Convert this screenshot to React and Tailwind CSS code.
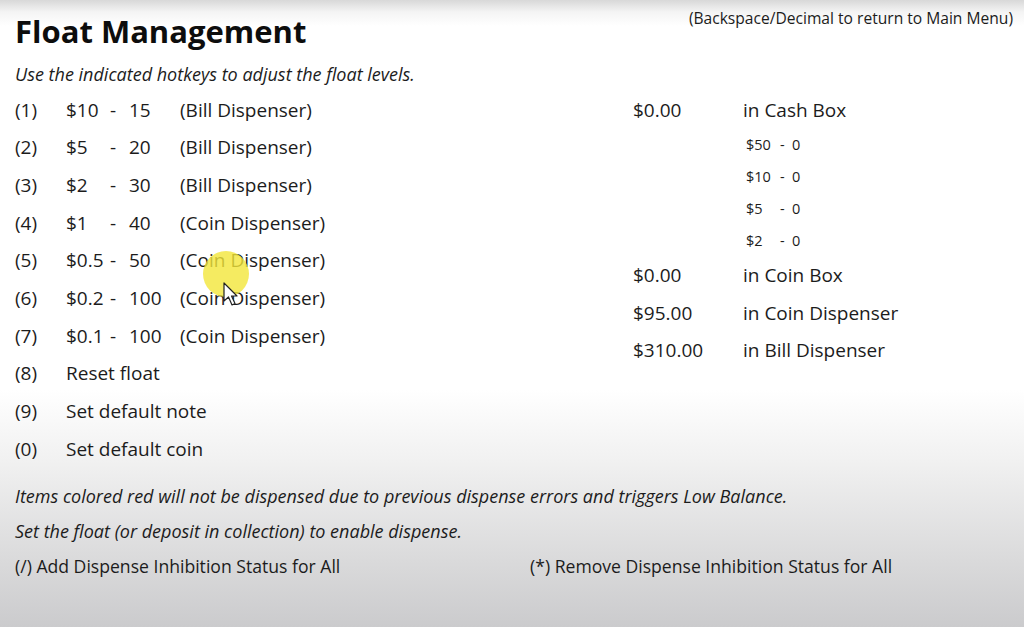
import React from 'react'

const hotkeys = [
  { key: '(1)', amount: '$10', count: '15', where: '(Bill Dispenser)' },
  { key: '(2)', amount: '$5', count: '20', where: '(Bill Dispenser)' },
  { key: '(3)', amount: '$2', count: '30', where: '(Bill Dispenser)' },
  { key: '(4)', amount: '$1', count: '40', where: '(Coin Dispenser)' },
  { key: '(5)', amount: '$0.5', count: '50', where: '(Coin Dispenser)' },
  { key: '(6)', amount: '$0.2', count: '100', where: '(Coin Dispenser)' },
  { key: '(7)', amount: '$0.1', count: '100', where: '(Coin Dispenser)' },
]

const actions = [
  { key: '(8)', label: 'Reset float' },
  { key: '(9)', label: 'Set default note' },
  { key: '(0)', label: 'Set default coin' },
]

const cashBox = [
  { note: '$50', count: '0' },
  { note: '$10', count: '0' },
  { note: '$5', count: '0' },
  { note: '$2', count: '0' },
]

const totals = [
  { amount: '$0.00', label: 'in Coin Box' },
  { amount: '$95.00', label: 'in Coin Dispenser' },
  { amount: '$310.00', label: 'in Bill Dispenser' },
]

function Cursor() {
  return (
    <div className="pointer-events-none absolute left-[203px] top-[251px]">
      <div className="h-[46px] w-[46px] rounded-full bg-[#f3e63a]/80" />
      <svg className="absolute left-[20px] top-[31px]" width="16" height="26" viewBox="0 0 16 26">
        <path d="M1 1 L1 19 L5.5 15 L9 23 L12 21.5 L8.5 14 L14 14 Z" fill="#fff" stroke="#222" strokeWidth="1.2" strokeLinejoin="round" />
      </svg>
    </div>
  )
}

export default function App() {
  return (
    <div
      className="relative h-[627px] w-[1024px] overflow-hidden bg-[linear-gradient(to_bottom,#d8d8d8_0px,#f4f4f4_12px,#ffffff_26px,#ffffff_390px,#f1f1f1_460px,#dadadb_560px,#cbcbcd_627px)] text-[#1c1c1c]"
      style={{ fontFamily: '"Open Sans", "Noto Sans", sans-serif' }}
    >
      <div className="flex items-start justify-between">
        <h1 className="ml-[15px] mt-[10px] text-[31px] font-bold leading-[42px] text-[#0d0d0d]">Float Management</h1>
        <p className="mr-[11px] mt-[7px] text-[15.6px] leading-[22px]">(Backspace/Decimal to return to Main Menu)</p>
      </div>
      <p className="ml-[15px] mt-[11px] text-[18px] italic leading-[22px]">Use the indicated hotkeys to adjust the float levels.</p>

      <div className="mt-[6px] flex">
        <div className="ml-[15px] w-[618px] text-[19px]">
          {hotkeys.map((h) => (
            <div key={h.key} className="grid h-[37.7px] grid-cols-[51px_44px_19px_51px_auto] items-center">
              <span>{h.key}</span>
              <span>{h.amount}</span>
              <span>-</span>
              <span>{h.count}</span>
              <span>{h.where}</span>
            </div>
          ))}
          {actions.map((a) => (
            <div key={a.key} className="grid h-[37.7px] grid-cols-[51px_auto] items-center">
              <span>{a.key}</span>
              <span>{a.label}</span>
            </div>
          ))}
        </div>

        <div className="text-[19px]">
          <div className="grid h-[37.7px] grid-cols-[110px_auto] items-center">
            <span>$0.00</span>
            <span>in Cash Box</span>
          </div>
          <div className="ml-[113px] text-[14.5px]">
            {cashBox.map((c) => (
              <div key={c.note} className="grid h-[32px] grid-cols-[34px_12px_auto] items-center">
                <span>{c.note}</span>
                <span>-</span>
                <span>{c.count}</span>
              </div>
            ))}
          </div>
          {totals.map((t) => (
            <div key={t.label} className="grid h-[37.5px] grid-cols-[110px_auto] items-center">
              <span>{t.amount}</span>
              <span>{t.label}</span>
            </div>
          ))}
        </div>
      </div>

      <div className="ml-[15px] mt-[11px] text-[18px] italic leading-[35px]">
        <p>Items colored red will not be dispensed due to previous dispense errors and triggers Low Balance.</p>
        <p>Set the float (or deposit in collection) to enable dispense.</p>
      </div>
      <div className="ml-[15px] flex text-[17.6px] leading-[35px]">
        <p className="w-[515px]">(/) Add Dispense Inhibition Status for All</p>
        <p>(*) Remove Dispense Inhibition Status for All</p>
      </div>

      <Cursor />
    </div>
  )
}
